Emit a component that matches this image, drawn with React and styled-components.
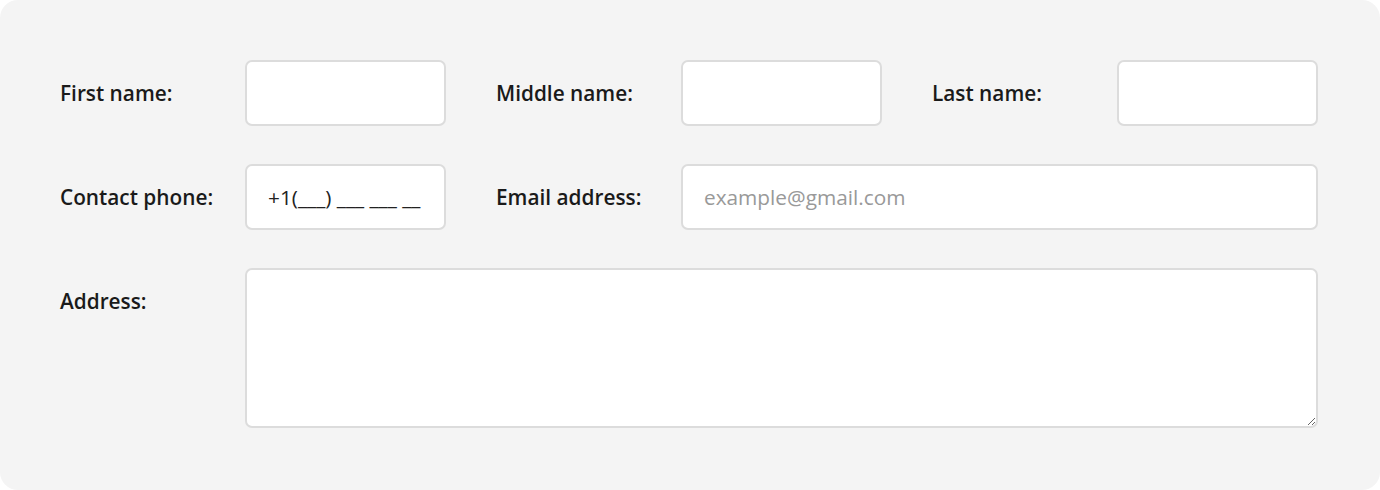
import React from 'react';
import styled, { createGlobalStyle } from 'styled-components';

const GlobalStyle = createGlobalStyle`
  html, body {
    margin: 0;
    padding: 0;
    background: #ffffff;
  }
  * {
    box-sizing: border-box;
  }
`;

const Card = styled.form`
  width: 1380px;
  height: 490px;
  background: #f4f4f4;
  border-radius: 18px;
  padding: 60px 62px 62px 60px;
  font-family: "Open Sans", "Liberation Sans", sans-serif;
`;

const Grid = styled.div`
  display: grid;
  grid-template-columns: 185px 201px 235px 201px 235px 201px;
  grid-template-rows: 66px 66px 160px;
  row-gap: 38px;
  align-items: start;
`;

const Label = styled.label`
  display: block;
  padding-left: ${(p) => (p.indent ? '50px' : '0')};
  line-height: 66px;
  font-size: 20.8px;
  font-weight: 600;
  color: #1a1a1a;
  white-space: nowrap;
`;

const Field = styled.input`
  grid-column: ${(p) => p.span || 'auto'};
  width: 100%;
  height: 66px;
  border: 2px solid #dcdcdc;
  border-radius: 7px;
  background: #ffffff;
  padding: 0 20px 0 21px;
  font-family: inherit;
  font-size: 20.8px;
  color: #222222;
  outline: none;

  &::placeholder {
    color: #999999;
  }
`;

const Area = styled.textarea`
  grid-column: 2 / 7;
  width: 100%;
  height: 160px;
  border: 2px solid #dcdcdc;
  border-radius: 7px;
  background: #ffffff;
  padding: 16px 21px;
  font-family: inherit;
  font-size: 20.8px;
  outline: none;
  resize: vertical;
`;

export default function App() {
  return (
    <>
      <GlobalStyle />
      <Card onSubmit={(e) => e.preventDefault()}>
        <Grid>
          <Label htmlFor="first">First name:</Label>
          <Field id="first" type="text" />
          <Label indent htmlFor="middle">Middle name:</Label>
          <Field id="middle" type="text" />
          <Label indent htmlFor="last">Last name:</Label>
          <Field id="last" type="text" />

          <Label htmlFor="phone">Contact phone:</Label>
          <Field id="phone" type="tel" defaultValue="+1(___) ___ ___ __" />
          <Label indent htmlFor="email">Email address:</Label>
          <Field id="email" type="email" span="4 / 7" placeholder="example@gmail.com" />

          <Label htmlFor="address">Address:</Label>
          <Area id="address" />
        </Grid>
      </Card>
    </>
  );
}
